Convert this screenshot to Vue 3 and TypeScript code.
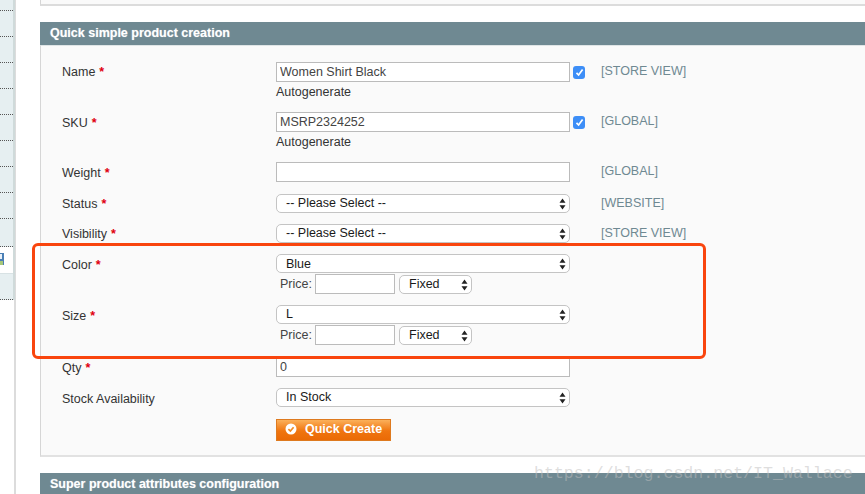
<script setup lang="ts">
const navRows = [11, 26, 26, 26, 26, 26, 26, 26, 26, 28];

interface Row {
  label: string;
  required: boolean;
  type: "input" | "select";
  value: string;
  note?: boolean;
  scope?: string;
  price?: boolean;
  cls: string;
}

const rows: Row[] = [
  { label: "Name", required: true, type: "input", value: "Women Shirt Black", note: true, scope: "[STORE VIEW]", cls: "gap-14" },
  { label: "SKU", required: true, type: "input", value: "MSRP2324252", note: true, scope: "[GLOBAL]", cls: "gap-14 low" },
  { label: "Weight", required: true, type: "input", value: "", scope: "[GLOBAL]", cls: "gap-12 low" },
  { label: "Status", required: true, type: "select", value: "-- Please Select --", scope: "[WEBSITE]", cls: "gap-11" },
  { label: "Visibility", required: true, type: "select", value: "-- Please Select --", scope: "[STORE VIEW]", cls: "gap-11" },
  { label: "Color", required: true, type: "select", value: "Blue", price: true, cls: "gap-11 low drop" },
  { label: "Size", required: true, type: "select", value: "L", price: true, cls: "gap-12 low" },
  { label: "Qty", required: true, type: "input", value: "0", cls: "gap-11 low" },
  { label: "Stock Availability", required: false, type: "select", value: "In Stock", cls: "gap-12 low" },
];
</script>

<template>
  <div class="page">
    <aside class="side">
      <div class="side-col">
        <div v-for="(h, i) in navRows" :key="i" class="nav-row" :style="{ height: h + 'px' }"></div>
        <div class="nav-icon">
          <svg width="5" height="13" viewBox="0 0 5 13">
            <rect x="-8" y="0" width="12" height="12" fill="#4a7fb5" />
            <rect x="-5" y="1" width="7" height="5" fill="#e8f0f8" />
            <rect x="-5" y="8" width="8" height="4" fill="#a8c878" />
          </svg>
        </div>
        <div class="nav-row last"></div>
      </div>
    </aside>

    <main class="main">
      <div class="top-panel"></div>

      <section class="panel">
        <h3 class="head">Quick simple product creation</h3>
        <div class="body">
          <div v-for="row in rows" :key="row.label" class="row" :class="row.cls">
            <label class="label">
              {{ row.label }}
              <span v-if="row.required" class="req">*</span>
            </label>
            <div class="field">
              <input v-if="row.type === 'input'" class="text" type="text" :value="row.value" />
              <div v-else class="select main-select">
                <span>{{ row.value }}</span>
                <svg class="arrows" width="7" height="12" viewBox="0 0 7 12">
                  <path d="M3.5 0.5 L6.5 4.8 H0.5 Z M3.5 11.5 L0.5 7.2 H6.5 Z" fill="#222" />
                </svg>
              </div>
              <div v-if="row.note" class="note">Autogenerate</div>
              <div v-if="row.price" class="price">
                <span class="price-label">Price:</span>
                <input class="text price-input" type="text" />
                <div class="select small">
                  <span>Fixed</span>
                  <svg class="arrows" width="7" height="12" viewBox="0 0 7 12">
                    <path d="M3.5 0.5 L6.5 4.8 H0.5 Z M3.5 11.5 L0.5 7.2 H6.5 Z" fill="#222" />
                  </svg>
                </div>
              </div>
            </div>
            <div class="check-col">
              <span v-if="row.note" class="check">
                <svg width="9" height="9" viewBox="0 0 9 9">
                  <path d="M1.5 4.8 L3.6 7 L7.6 1.6" fill="none" stroke="#fff" stroke-width="1.7" />
                </svg>
              </span>
            </div>
            <div v-if="row.scope" class="scope">{{ row.scope }}</div>
          </div>

          <div class="row actions">
            <div class="label"></div>
            <button class="create" type="button">
              <span class="create-icon">
                <svg width="12" height="12" viewBox="0 0 12 12">
                  <circle cx="6" cy="6" r="5.5" fill="#fff" />
                  <path d="M3.4 6.1 L5.4 8 L8.6 4.2" fill="none" stroke="#f08a24" stroke-width="1.7" />
                </svg>
              </span>
              Quick Create
            </button>
          </div>
        </div>
      </section>

      <section class="panel second">
        <h3 class="head">Super product attributes configuration</h3>
      </section>
    </main>

    <div class="callout"></div>
    <div class="watermark">https://blog.csdn.net/IT_Wallace</div>
  </div>
</template>

<style>
html,
body {
  margin: 0;
  background: #fff;
  overflow: hidden;
}
</style>

<style scoped>
.page {
  position: relative;
  display: flex;
  width: 865px;
  height: 494px;
  overflow: hidden;
  background: #fff;
  font-family: "Liberation Sans", Arial, sans-serif;
  font-size: 12.5px;
  color: #2f2f2f;
}

.side {
  flex: none;
  width: 16px;
  box-sizing: border-box;
  border-right: 2px solid #dcdcdc;
  padding-right: 1px;
}

.side-col {
  width: 13px;
  border-right: 2px solid #cfdada;
}

.nav-row {
  box-sizing: border-box;
  background: #e6eff1;
  border-bottom: 1px dotted #555;
}

.nav-row.last {
  height: 27px;
  border-top: 1px solid #d8e2e4;
}

.nav-icon {
  height: 26px;
  padding-top: 6px;
  box-sizing: border-box;
  background: #fff;
}

.nav-icon svg {
  display: block;
}

.main {
  flex: 1;
  min-width: 0;
  padding-left: 24px;
}

.top-panel {
  height: 4px;
  background: #fafafa;
  border-left: 1px solid #d6d6d6;
  border-bottom: 2px solid #dcdcdc;
  margin-bottom: 16px;
}

.panel.second {
  margin-top: 16px;
}

.head {
  margin: 0;
  height: 23px;
  line-height: 22px;
  padding-left: 10px;
  background: #6f8992;
  color: #fff;
  font-size: 12.5px;
  font-weight: bold;
  text-shadow: 0 0 1px rgba(255, 255, 255, 0.5);
}

.body {
  box-sizing: border-box;
  height: 412px;
  padding: 16px 0 0 21px;
  background: #fafafa;
  border-left: 1px solid #d6d6d6;
  border-top: 1px solid #dfe5e6;
  border-bottom: 2px solid #e2e2e2;
}

.row {
  display: grid;
  grid-template-columns: 214px 294px 31px auto;
  align-items: start;
}

.gap-14 {
  margin-bottom: 14px;
}

.gap-12 {
  margin-bottom: 12px;
}

.gap-11 {
  margin-bottom: 11px;
}

.label {
  padding-top: 1px;
  margin-bottom: -1px;
  line-height: 19px;
  color: #333;
}

.low .label {
  padding-top: 2px;
  margin-bottom: -2px;
}

.req {
  color: #e0000f;
  font-weight: bold;
  margin-left: 0.5px;
}

.field {
  min-width: 0;
}

.text {
  display: block;
  box-sizing: border-box;
  width: 294px;
  height: 20px;
  margin: 0;
  padding: 0 3px;
  border: 1px solid #bbb;
  border-radius: 0;
  background: #fff;
  font: 12.5px "Liberation Sans", Arial, sans-serif;
  color: #444;
  outline: none;
}

.select {
  position: relative;
  box-sizing: border-box;
  width: 294px;
  height: 19px;
  line-height: 16px;
  padding-left: 9px;
  border: 1px solid #c4c4c4;
  border-radius: 5px;
  background: #fff;
  color: #1a1a1a;
}

.drop .main-select {
  line-height: 18px;
}

.arrows {
  position: absolute;
  right: 3px;
  top: 3px;
}

.note {
  height: 14px;
  line-height: 16px;
  margin-top: 2px;
  color: #333;
}

.price {
  display: flex;
  align-items: center;
  height: 20px;
  margin-top: 1px;
  padding-left: 4px;
}

.price-label {
  width: 35px;
  color: #444;
}

.price-input {
  width: 80px;
}

.select.small {
  width: 73px;
  margin-left: 4px;
  padding-left: 9px;
}

.check-col {
  padding: 4px 0 0 3px;
}

.check {
  display: flex;
  align-items: center;
  justify-content: center;
  width: 12px;
  height: 13px;
  border-radius: 3px;
  background: #3d8ef7;
}

.scope {
  line-height: 18px;
  color: #6f8992;
  font-size: 12.5px;
  white-space: nowrap;
}

.actions {
  margin-bottom: 0;
}

.create {
  display: flex;
  align-items: center;
  justify-self: start;
  box-sizing: border-box;
  width: 115px;
  height: 22px;
  margin: 0;
  padding: 0 0 2px 8px;
  border: 1px solid #de7a1f;
  border-radius: 0;
  background: linear-gradient(#fbb05a, #f0750f 55%, #ea6a06);
  color: #fff;
  font: bold 12.5px "Liberation Sans", Arial, sans-serif;
}

.create-icon {
  display: flex;
  margin-right: 8px;
}

.callout {
  position: absolute;
  left: 32px;
  top: 243px;
  width: 674px;
  height: 116px;
  box-sizing: border-box;
  border: 3px solid #f9450e;
  border-radius: 6px;
}

.watermark {
  position: absolute;
  left: 534px;
  top: 464px;
  font-family: "Liberation Mono", monospace;
  font-size: 16.6px;
  color: rgba(190, 190, 190, 0.5);
  white-space: nowrap;
}
</style>
